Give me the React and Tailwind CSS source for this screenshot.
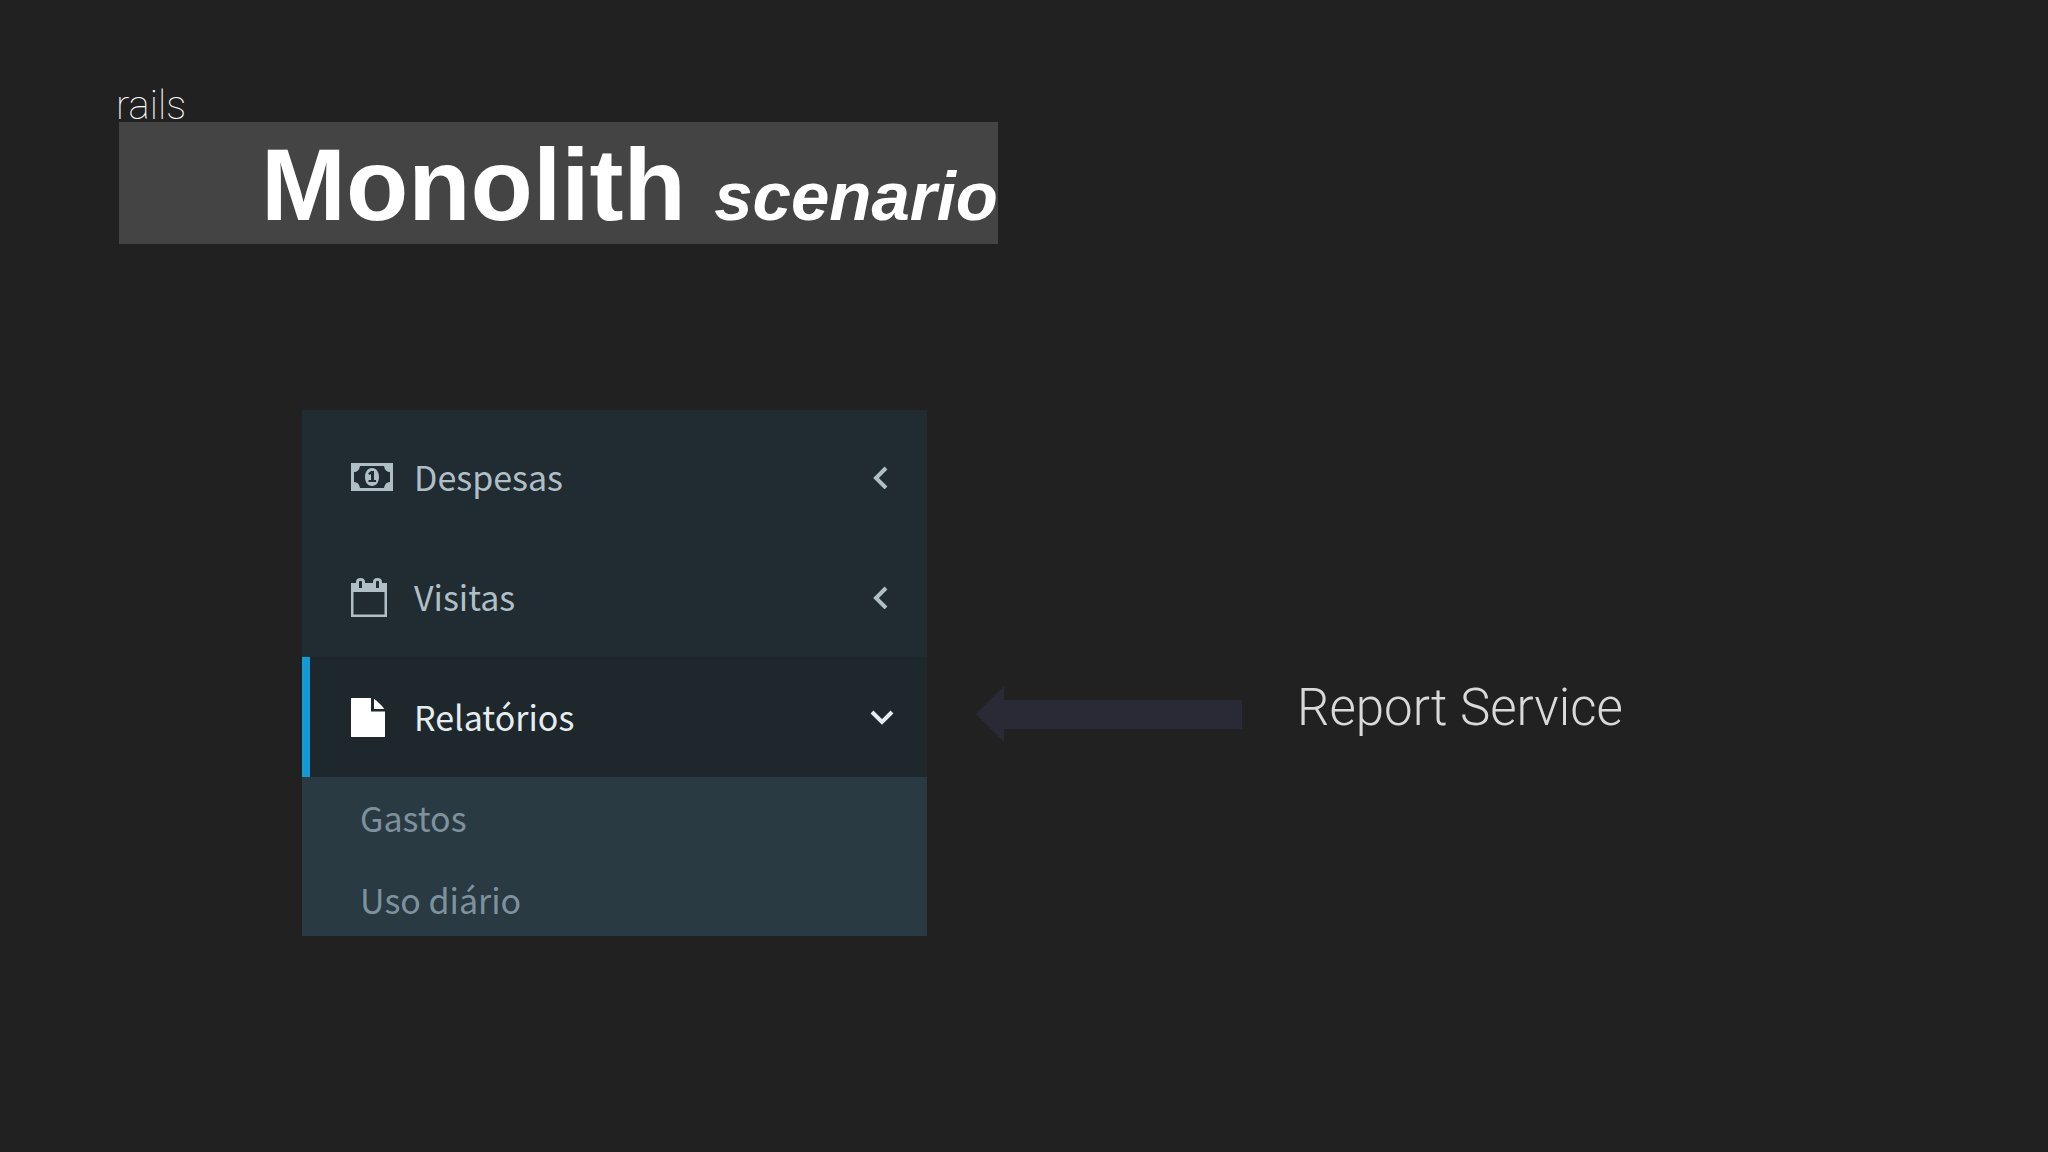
const MENU = [
  { label: "Despesas", icon: MoneyIcon },
  { label: "Visitas", icon: CalendarIcon },
  { label: "Relatórios", icon: FileIcon, open: true },
];

const SUBMENU = ["Gastos", "Uso diário"];

function MoneyIcon() {
  return (
    <svg viewBox="0 0 42 28" className="h-7 w-[42px]" fill="currentColor" fillRule="evenodd" aria-hidden="true">
      <path d="M0 0H42V28H0ZM9 3Q8 9 3 9V19Q8 19 9 25H33Q34 19 39 19V9Q34 9 33 3Z" />
      <path d="M21 5C25.500 5 28 9 28 14S25.500 23 21 23S14 19 14 14S16.500 5 21 5ZM17 10.500L18.500 12L20 11V17H17.500V19H25V17H23V8H20Z" />
    </svg>
  );
}

function CalendarIcon() {
  return (
    <svg viewBox="0 0 36 39" className="h-[39px] w-9" fill="currentColor" fillRule="evenodd" aria-hidden="true">
      <path d="M0 5H5V4Q5 0 9.500 0T14 4V5H22V4Q22 0 26.500 0T31 4V5H36V39H0ZM2.500 14V36.500H33.500V14ZM8 3.500V10H11V3.500Q9.500 2 8 3.500ZM25 3.500V10H28V3.500Q26.500 2 25 3.500Z" />
    </svg>
  );
}

function FileIcon() {
  return (
    <svg viewBox="0 0 34 39" className="h-[39px] w-[34px]" fill="currentColor" aria-hidden="true">
      <path d="M0 0H20V13.500H34V39H0Z" />
      <path d="M23 1Q25 2 29 6T33 11H23Z" />
    </svg>
  );
}

function Chevron({ open }) {
  return (
    <svg viewBox="0 0 24 24" className="size-6" fill="none" stroke="currentColor" strokeWidth="4" aria-hidden="true">
      <path d={open ? "M2 7L12 17L22 7" : "M16 3L6 13L16 23"} />
    </svg>
  );
}

export default function App() {
  return (
    <main className="min-h-screen bg-[#212122] pt-[84px] pl-[116px] font-[Roboto,sans-serif] text-white">
      <header className="flex flex-col items-start">
        <p className="h-[38px] text-[40px] leading-[44px] font-thin text-white">rails</p>
        <h1 className="ml-[3px] bg-[#444444] pt-[5px] pl-[142px] font-['Liberation_Sans',Arial,sans-serif] text-[102px] leading-[117px] font-bold whitespace-nowrap">
          Monolith <em className="text-[69px] leading-none">scenario</em>
        </h1>
      </header>

      <section className="mt-[166px] flex items-start pl-[186px]">
        <nav className="w-[625px] bg-[#202b32] pt-[7px] font-['Noto_Sans_CJK_SC',sans-serif] text-[34px] leading-[48px]">
          {MENU.map(({ label, icon: Icon, open }) => (
            <button
              key={label}
              type="button"
              aria-expanded={!!open}
              className={
                open
                  ? "flex h-[120px] w-full items-center border-l-8 border-[#1399d3] bg-[#1d272c] pr-[33px] pl-[41px] text-[#e6edf0]"
                  : "flex h-[120px] w-full items-center border-l-8 border-transparent pr-[33px] pl-[41px] text-[#b0bfc6]"
              }
            >
              <span className={open ? "w-[63px] text-white" : "w-[63px]"}>
                <Icon />
              </span>
              {label}
              <span className="ml-auto">
                <Chevron open={open} />
              </span>
            </button>
          ))}
          <ul className="flex flex-col gap-[34px] bg-[#293a43] pt-[17px] pb-3 pl-[58px] text-[#7e929d]">
            {SUBMENU.map((label) => (
              <li key={label}>
                <a href="#">{label}</a>
              </li>
            ))}
          </ul>
        </nav>

        <div className="mt-[268px] ml-[49px] flex items-start gap-[55px]">
          <svg viewBox="0 0 266 56" className="mt-2 h-14 w-[266px]" fill="#2a2a37" aria-hidden="true">
            <path d="M0 28L28 0V14H266V43H28V56Z" />
          </svg>
          <p className="text-[51px] leading-[60px] font-light text-[#d9d9da]">Report Service</p>
        </div>
      </section>
    </main>
  );
}
